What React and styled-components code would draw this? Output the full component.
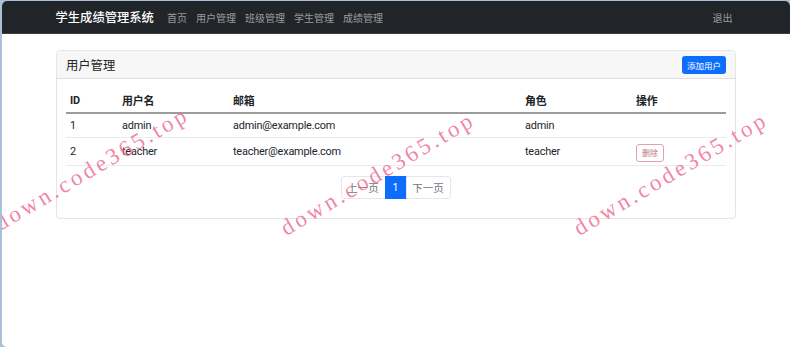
import React from "react";
import styled, { createGlobalStyle } from "styled-components";

const Global = createGlobalStyle`
  html, body { margin: 0; padding: 0; background: #a9c0d8; }
  body { font-family: Roboto, "Noto Sans CJK SC", sans-serif; color: #212529; }
  * { box-sizing: border-box; }
`;

const Frame = styled.div`
  position: relative;
  margin: 1px 0 0 2px;
  height: 346px;
  background: #fff;
  border-radius: 5px 5px 0 5px;
  overflow: hidden;
`;

const Navbar = styled.nav`
  background: #212529;
  height: 33px;
  border-bottom: 1px solid #3a3f44;
`;

const Container = styled.div`
  width: 681px;
  margin: 0 auto;
  height: 100%;
  display: flex;
  align-items: center;
`;

const Brand = styled.div`
  color: #fff;
  font-size: 12.3px;
  font-weight: 500;
  margin-right: 13px;
`;

const NavLinks = styled.div`
  display: flex;
  gap: 9px;
  flex: 1;
`;

const NavLink = styled.span`
  color: rgba(255, 255, 255, 0.55);
  font-size: 10px;
`;

const Logout = styled.span`
  color: rgba(255, 255, 255, 0.55);
  font-size: 10px;
  margin-right: 4px;
`;

const Main = styled.div`
  width: 680px;
  margin: 16px auto 0;
`;

const Card = styled.div`
  border: 1px solid rgba(0, 0, 0, 0.1);
  border-radius: 4px;
  overflow: hidden;
`;

const CardHeader = styled.div`
  height: 28px;
  background: #f7f7f7;
  border-bottom: 1px solid rgba(0, 0, 0, 0.1);
  display: flex;
  align-items: center;
  justify-content: space-between;
  padding: 0 9px;
`;

const CardTitle = styled.div`
  font-size: 12.3px;
  color: #212529;
`;

const PrimaryButton = styled.button`
  background: #0d6efd;
  color: #fff;
  border: none;
  border-radius: 3px;
  height: 18px;
  width: 44px;
  font-size: 8.5px;
  font-family: inherit;
  padding: 0;
`;

const CardBody = styled.div`
  padding: 9px 9px 0;
`;

const Table = styled.table`
  width: 100%;
  border-collapse: collapse;
  font-size: 10.9px;
  letter-spacing: -0.2px;
`;

const Th = styled.th`
  text-align: left;
  font-weight: 700;
  padding: 0 4px;
  height: 25px;
  border-bottom: 2px solid #9c9c9c;
  width: ${(p) => p.$w || "auto"};
`;

const Td = styled.td`
  padding: 0 4px;
  height: ${(p) => (p.$tall ? "28px" : "24px")};
  border-bottom: 1px solid #e9ecef;
  vertical-align: middle;
`;

const DangerButton = styled.button`
  background: #fff;
  border: 1px solid #e0a3ab;
  color: #c47580;
  border-radius: 3px;
  font-family: inherit;
  font-size: 8px;
  width: 28px;
  height: 18px;
  padding: 0;
  margin-top: 3px;
`;

const Pager = styled.div`
  display: flex;
  justify-content: center;
  margin: 10px 0 19px;
`;

const PageItem = styled.span`
  height: 23px;
  width: ${(p) => p.$w};
  display: flex;
  align-items: center;
  justify-content: center;
  font-size: 10.5px;
  border: 1px solid ${(p) => (p.$active ? "#0d6efd" : "#e4e7ea")};
  background: ${(p) => (p.$active ? "#0d6efd" : "#fff")};
  color: ${(p) => (p.$active ? "#fff" : "#6c757d")};
  margin-left: -1px;
  &:first-child { border-radius: 3px 0 0 3px; }
  &:last-child { border-radius: 0 3px 3px 0; }
`;

const Watermark = styled.div`
  position: absolute;
  left: ${(p) => p.$x}px;
  top: ${(p) => p.$y}px;
  transform: translate(-50%, -50%) rotate(-30.5deg);
  font-family: "Liberation Serif", "DejaVu Serif", serif;
  font-size: 23px;
  letter-spacing: 3.2px;
  color: rgba(238, 100, 140, 0.78);
  white-space: nowrap;
  pointer-events: none;
`;

const users = [
  { id: 1, name: "admin", email: "admin@example.com", role: "admin", del: false },
  { id: 2, name: "teacher", email: "teacher@example.com", role: "teacher", del: true },
];

export default function App() {
  return (
    <>
      <Global />
      <Frame>
        <Navbar>
          <Container>
            <Brand>学生成绩管理系统</Brand>
            <NavLinks>
              <NavLink>首页</NavLink>
              <NavLink>用户管理</NavLink>
              <NavLink>班级管理</NavLink>
              <NavLink>学生管理</NavLink>
              <NavLink>成绩管理</NavLink>
            </NavLinks>
            <Logout>退出</Logout>
          </Container>
        </Navbar>
        <Main>
          <Card>
            <CardHeader>
              <CardTitle>用户管理</CardTitle>
              <PrimaryButton>添加用户</PrimaryButton>
            </CardHeader>
            <CardBody>
              <Table>
                <thead>
                  <tr>
                    <Th $w="52px">ID</Th>
                    <Th $w="111px">用户名</Th>
                    <Th $w="292px">邮箱</Th>
                    <Th $w="111px">角色</Th>
                    <Th>操作</Th>
                  </tr>
                </thead>
                <tbody>
                  {users.map((u) => (
                    <tr key={u.id}>
                      <Td $tall={u.del}>{u.id}</Td>
                      <Td $tall={u.del}>{u.name}</Td>
                      <Td $tall={u.del}>{u.email}</Td>
                      <Td $tall={u.del}>{u.role}</Td>
                      <Td $tall={u.del}>{u.del && <DangerButton>删除</DangerButton>}</Td>
                    </tr>
                  ))}
                </tbody>
              </Table>
              <Pager>
                <PageItem $w="45px">上一页</PageItem>
                <PageItem $w="22px" $active>1</PageItem>
                <PageItem $w="45px">下一页</PageItem>
              </Pager>
            </CardBody>
          </Card>
        </Main>
        <Watermark $x={90} $y={168}>down.code365.top</Watermark>
        <Watermark $x={376} $y={173}>down.code365.top</Watermark>
        <Watermark $x={669} $y={173}>down.code365.top</Watermark>
      </Frame>
    </>
  );
}
